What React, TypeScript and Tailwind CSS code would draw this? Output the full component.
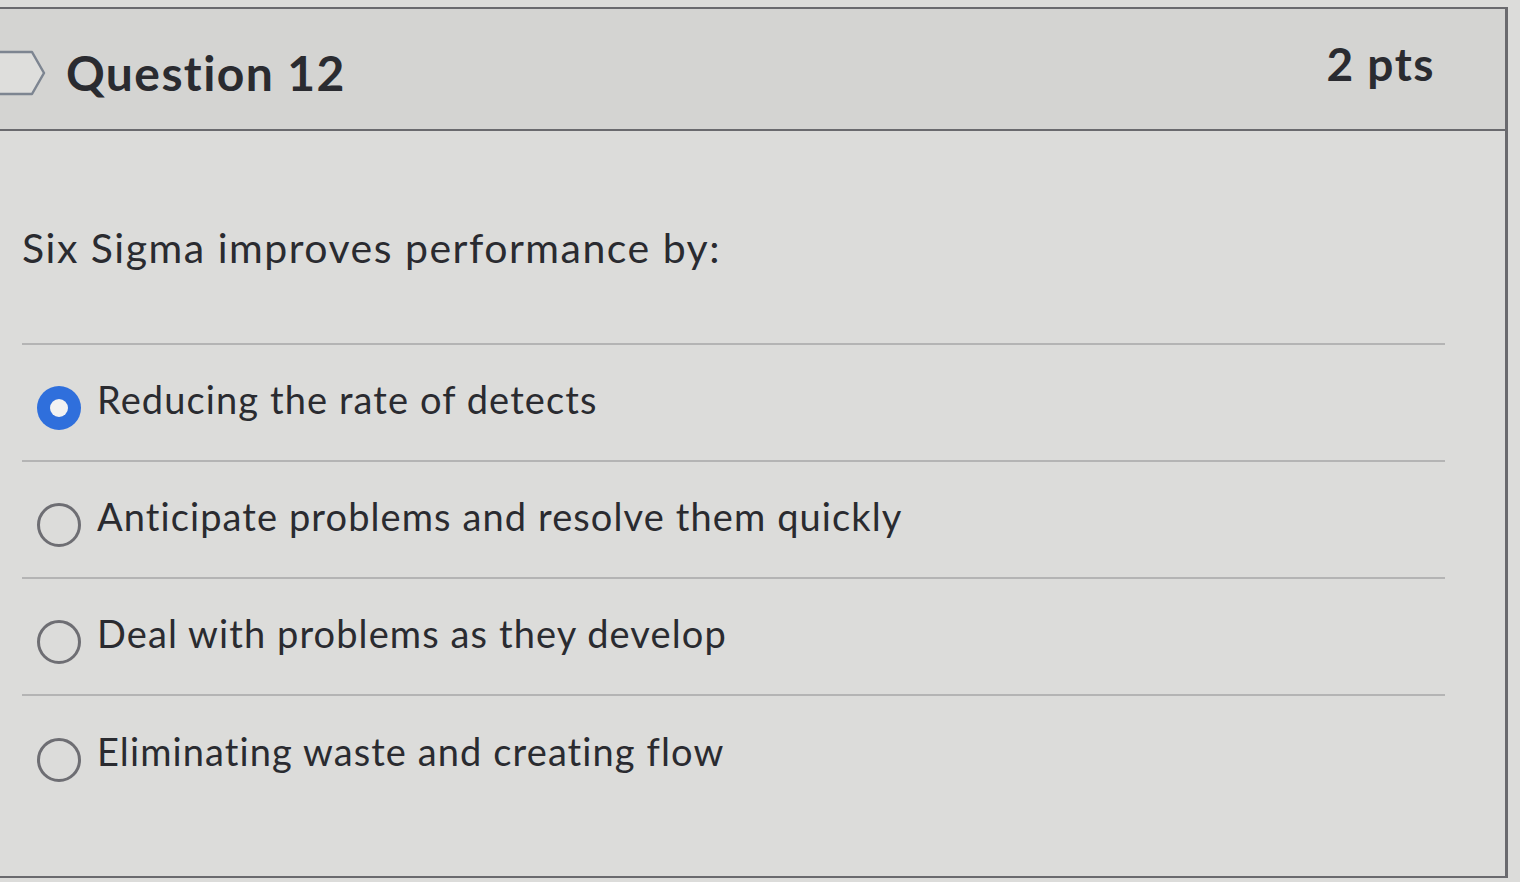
import { useState } from "react";

const options = [
  "Reducing the rate of detects",
  "Anticipate problems and resolve them quickly",
  "Deal with problems as they develop",
  "Eliminating waste and creating flow",
];

export default function App() {
  const [selected, setSelected] = useState(0);

  return (
    <div className="min-h-screen bg-[#dcdcda] pt-[7px] font-['Lato','Noto_Sans',sans-serif] text-[#2a2b30]">
      <div className="w-[1508px] border-r-[3px] border-b-2 border-[#6a6a6e]">
        <div className="h-[124px] bg-[#d4d4d2] border-t-2 border-b-2 border-[#6a6a6e] flex items-start justify-between">
          <div className="flex items-center gap-[20px] pt-[40px]">
            <svg width="46" height="48" viewBox="0 0 46 48" className="shrink-0">
              <path d="M0 3 H32 L44 24 L32 45 H0" fill="#dededc" stroke="#7d8591" strokeWidth="2.5" strokeLinejoin="round" />
            </svg>
            <h2 className="text-[48px] font-bold tracking-[1.4px] leading-none">Question 12</h2>
          </div>
          <div className="pt-[32px] pr-[70px] text-[46px] font-bold tracking-[1.5px] leading-none">2 pts</div>
        </div>

        <div className="pl-[22px] pr-[60px] pb-[63px]">
          <p className="pt-[96px] pb-[75px] text-[41px] tracking-[1.5px] leading-none">Six Sigma improves performance by:</p>
          <ul className="border-t-2 border-[#b4b4b4]">
            {options.map((o, i) => (
              <li
                key={o}
                onClick={() => setSelected(i)}
                className={`h-[117px] pt-[10px] flex items-center gap-[16px] pl-[15px] cursor-pointer ${i < options.length - 1 ? "border-b-2 border-[#b4b4b4]" : ""}`}
              >
                {selected === i ? (
                  <span className="w-[44px] h-[44px] rounded-full bg-[#2f6fdc] flex items-center justify-center shrink-0">
                    <span className="w-[18px] h-[18px] rounded-full bg-[#f2f2f2]" />
                  </span>
                ) : (
                  <span className="w-[44px] h-[44px] rounded-full border-[3px] border-[#6e6e73] shrink-0" />
                )}
                <span className="text-[38px] tracking-[1.1px] leading-none -mt-[18px]">{o}</span>
              </li>
            ))}
          </ul>
        </div>
      </div>
    </div>
  );
}
